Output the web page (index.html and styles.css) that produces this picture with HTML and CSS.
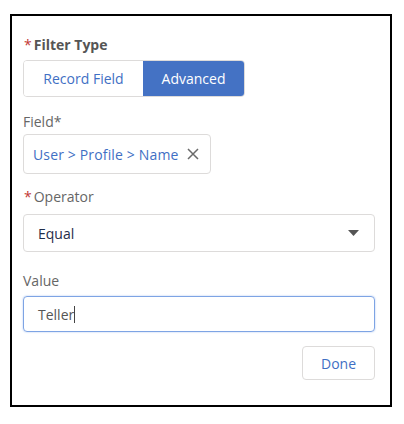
FILE: index.html
```html
<!DOCTYPE html>
<html>
<head>
<meta charset="utf-8">
<link rel="stylesheet" href="styles.css">
</head>
<body>
<div class="frame">
  <div class="label label-bold label-first"><span class="req">*</span>Filter Type</div>
  <div class="segment">
    <div class="seg seg-off">Record Field</div>
    <div class="seg seg-on">Advanced</div>
  </div>
  <div class="label label-field">Field*</div>
  <div class="pill">
    <span class="pill-text">User &gt; Profile &gt; Name</span>
    <svg class="pill-x" width="12" height="12" viewBox="0 0 12 12"><path d="M1 1 L11 11 M11 1 L1 11" stroke="#6b6b6b" stroke-width="1.5" fill="none"/></svg>
  </div>
  <div class="label label-op"><span class="req">*</span>Operator</div>
  <div class="select">
    <span class="select-text">Equal</span>
    <svg class="caret" width="11" height="6" viewBox="0 0 11 6"><path d="M0 0 H11 L5.5 6 Z" fill="#555"/></svg>
  </div>
  <div class="label label-val">Value</div>
  <div class="input"><span class="input-text">Teller</span><span class="cursor"></span></div>
  <div class="actions">
    <div class="btn">Done</div>
  </div>
</div>
</body>
</html>
```
FILE: styles.css
```css
* { box-sizing: border-box; }
html, body { margin: 0; padding: 0; background: #fff; }
body { font-family: "Open Sans", "Noto Sans", sans-serif; font-size: 14px; }

.frame {
  margin: 14px 0 0 10px;
  width: 382px;
  height: 393px;
  border: 2px solid #000;
  padding: 19px 15px 0 11px;
}

.label {
  height: 20px;
  line-height: 20px;
  color: #666;
  font-size: 14px;
}
.label-bold { font-weight: 700; color: #555; }
.req { color: #c23934; margin: 0 2px 0 1px; font-weight: 400; }

.segment {
  margin-top: 5px;
  display: flex;
  width: 222px;
  height: 37px;
  border: 1px solid #dddbda;
  border-radius: 4px;
  overflow: hidden;
}
.seg {
  display: flex;
  align-items: center;
  justify-content: center;
  font-size: 14px;
}
.seg-off { width: 119px; color: #3f6fc4; background: #fff; }
.seg-on { flex: 1; color: #fff; background: #4472c4; }

.label-field { margin-top: 15px; }

.pill {
  margin-top: 2px;
  width: 188px;
  height: 40px;
  border: 1px solid #dddbda;
  border-radius: 4px;
  display: flex;
  align-items: center;
  padding-left: 9px;
}
.pill-text { color: #3f6fc4; font-size: 14px; letter-spacing: 0.15px; }
.pill-x { margin-left: 8px; }

.label-op { margin-top: 13px; }

.select {
  margin-top: 7px;
  height: 38px;
  border: 1px solid #dddbda;
  border-radius: 4px;
  display: flex;
  align-items: center;
  justify-content: space-between;
  padding: 0 15px 0 14px;
}
.select-text { color: #1f2d4a; font-size: 14px; }

.label-val { margin-top: 19px; }

.input {
  margin-top: 5px;
  height: 36px;
  border: 1px solid #7ea4e4;
  border-radius: 4px;
  box-shadow: 0 0 2px #a9c3ef;
  display: flex;
  align-items: center;
  padding-left: 14px;
}
.input-text { color: #555; font-size: 14px; }
.cursor { display: inline-block; width: 1px; height: 17px; background: #444; }

.actions {
  margin-top: 14px;
  display: flex;
  justify-content: flex-end;
}
.btn {
  width: 73px;
  height: 34px;
  border: 1px solid #dddbda;
  border-radius: 4px;
  display: flex;
  align-items: center;
  justify-content: center;
  color: #3f6fc4;
  font-size: 14px;
}
```
